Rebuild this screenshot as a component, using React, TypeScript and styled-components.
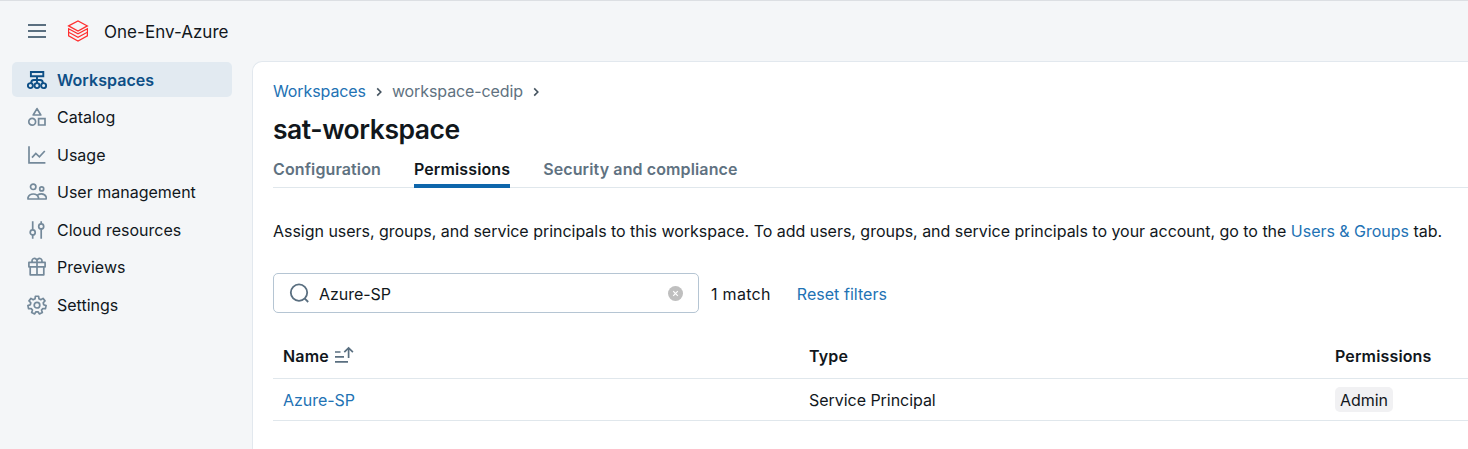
import React from "react";
import styled, { createGlobalStyle, css } from "styled-components";

const GlobalStyle = createGlobalStyle`
  * { box-sizing: border-box; }
  body {
    margin: 0;
    background: #f4f6f8;
    color: #11171c;
    font-family: Inter, "Liberation Sans", sans-serif;
    font-size: 16px;
    line-height: 25px;
  }
`;

const Page = styled.div`
  display: flex;
  flex-direction: column;
  height: 449px;
  overflow: hidden;
  border-top: 1px solid #dcdfe3;
`;

const Header = styled.header`
  display: flex;
  align-items: center;
  height: 60px;
  padding-left: 27px;
`;

const MenuButton = styled.button`
  display: flex;
  padding: 0;
  border: 0;
  background: none;
`;

const Logo = styled.svg`
  margin: 0 15px 0 20px;
`;

const AccountName = styled.span`
  padding-top: 2px;
  font-size: 17px;
  letter-spacing: 0.03px;
`;

const Body = styled.div`
  display: flex;
  flex: 1;
  min-height: 0;
`;

const Sidebar = styled.nav`
  display: flex;
  flex-direction: column;
  gap: 2.5px;
  width: 252px;
  padding: 1px 20px 0 12px;
`;

const NavItem = styled.a<{ $active?: boolean }>`
  display: flex;
  align-items: center;
  gap: 10px;
  height: 35px;
  padding: 1px 0 0 15px;
  border-radius: 5px;
  svg {
    color: #74899a;
    flex: none;
    margin-top: -1px;
  }
  ${(p) =>
    p.$active &&
    css`
      background: #e2eaf1;
      color: #0e4f86;
      font-weight: 600;
      letter-spacing: 0.05px;
      svg { color: #0e4f86; }
    `}
`;

const Panel = styled.main`
  flex: 1;
  min-width: 0;
  padding: 17px 0 0 20px;
  background: #fff;
  border: 1px solid #e2e8ee;
  border-width: 1px 0 0 1px;
  border-top-left-radius: 10px;
`;

const Breadcrumbs = styled.div`
  display: flex;
  align-items: center;
  height: 25px;
  color: #5f7281;
  letter-spacing: -0.1px;
  svg { margin: 1px 8px 0 8px; }
`;

const Link = styled.a`
  color: #2272b4;
`;

const Title = styled.h1`
  margin: 8px 0 0;
  height: 35px;
  font-size: 26.5px;
  line-height: 35px;
  font-weight: 600;
  letter-spacing: -0.45px;
`;

const Tabs = styled.div`
  display: flex;
  gap: 33px;
  height: 41px;
  border-bottom: 1px solid #e0e7ec;
`;

const Tab = styled.div<{ $active?: boolean }>`
  height: 41px;
  padding-top: 10px;
  font-weight: 600;
  letter-spacing: 0.12px;
  color: ${(p) => (p.$active ? "#11171c" : "#5f7281")};
  border-bottom: ${(p) => (p.$active ? "4px solid #0e66ab" : "0")};
`;

const Description = styled.p`
  margin: 31px 0 0;
  white-space: nowrap;
  letter-spacing: -0.025px;
`;

const Filters = styled.div`
  display: flex;
  align-items: center;
  margin-top: 29px;
`;

const SearchBox = styled.div`
  display: flex;
  align-items: center;
  width: 426px;
  height: 40px;
  padding: 0 15px;
  border: 1px solid #b5c5d3;
  border-radius: 5px;
`;

const SearchText = styled.span`
  flex: 1;
  padding: 2px 0 0 10px;
  letter-spacing: -0.03px;
`;

const MatchCount = styled.span`
  margin: 2px 26px 0 12px;
  letter-spacing: 0.3px;
`;

const ResetLink = styled(Link)`
  margin-top: 2px;
  letter-spacing: 0.04px;
`;

const TableRow = styled.div<{ $head?: boolean }>`
  display: grid;
  grid-template-columns: 526px 526px 1fr;
  align-items: center;
  height: ${(p) => (p.$head ? "44px" : "42px")};
  margin-top: ${(p) => (p.$head ? "22px" : "0")};
  padding: ${(p) => (p.$head ? "0 0 1px 10px" : "1px 0 0 10px")};
  border-bottom: 1px solid #e0e7ec;
  font-weight: ${(p) => (p.$head ? 600 : 400)};
  letter-spacing: ${(p) => (p.$head ? "0.15px" : "-0.04px")};
`;

const Cell = styled.div`
  display: flex;
  align-items: center;
  gap: 5px;
  height: 25px;
`;

const SortIcon = styled.svg`
  margin-top: -1px;
`;

const Tag = styled.span`
  height: 25px;
  margin-top: -2px;
  padding: 1px 5px 0;
  border-radius: 5px;
  background: #f1f1f3;
`;

const Icon = ({ children }: { children: React.ReactNode }) => (
  <svg width="20" height="20" viewBox="0 0 20 20" fill="none" stroke="currentColor" strokeWidth="1.7">
    {children}
  </svg>
);

// Outline of a seven-toothed gear centred in a 20x20 box.
const gearPath = () => {
  const points: string[] = [];
  for (let tooth = 0; tooth < 7; tooth++) {
    const centre = -90 + (tooth * 360) / 7;
    for (const [offset, radius] of [
      [-17, 6.7],
      [-10, 9.1],
      [10, 9.1],
      [17, 6.7],
    ]) {
      const a = ((centre + offset) * Math.PI) / 180;
      points.push(`${(10 + radius * Math.cos(a)).toFixed(2)} ${(10.2 + radius * Math.sin(a)).toFixed(2)}`);
    }
  }
  return `M${points.join("L")}Z`;
};

const navItems = [
  {
    label: "Workspaces",
    icon: (
      <>
        <path
          d="M3.9 2h12.4v4.2H3.9zM10 6.2v7M4.2 13c0-2 1-3 2.6-3h6.4c1.6 0 2.6 1 2.6 3"
          strokeWidth="1.9"
        />
        <g strokeWidth="1.9">
          <circle cx="3.4" cy="15.6" r="2.5" />
          <circle cx="10" cy="15.6" r="2.5" />
          <circle cx="16.6" cy="15.6" r="2.5" />
        </g>
      </>
    ),
  },
  {
    label: "Catalog",
    icon: (
      <>
        <path d="M10 1.6 13.8 8H6.2z" strokeLinejoin="round" />
        <circle cx="5.2" cy="14.8" r="3.4" />
        <path d="M11.6 11.6H18V18h-6.4z" />
      </>
    ),
  },
  {
    label: "Usage",
    icon: <path d="M2 1.2V17.8h16.4M5 12.6l3.8-4.2 3.6 3.4 5.4-5.8" />,
  },
  {
    label: "User management",
    icon: (
      <>
        <circle cx="6.2" cy="4.8" r="2.7" />
        <circle cx="14.7" cy="6.9" r="2" />
        <path
          d="M1 17v-1.4C1.8 13.3 3.8 12 6.3 12s4.4 1.3 5.2 3.6V17zM10.7 13c1-.7 2.2-1.1 3.7-1.1 2.3 0 4 1.1 4.8 3.1v2h-7.7"
          strokeLinejoin="round"
        />
      </>
    ),
  },
  {
    label: "Cloud resources",
    icon: (
      <>
        <path d="M5.7 1.2v8.6M5.7 15v3.8M14.2 1.2v2.6M14.2 9v9.8" />
        <circle cx="5.7" cy="12.4" r="2.5" />
        <circle cx="14.2" cy="6.4" r="2.5" />
      </>
    ),
  },
  {
    label: "Previews",
    icon: (
      <path
        d="M1.9 5.4h16.2v4.4H1.9zM3.2 9.8h13.6v8H3.2zM10 5.4v12.4M10 5.2V4a2.5 2.5 0 1 0-4.6 1.3M10 4a2.5 2.5 0 1 1 4.6 1.3"
        strokeLinejoin="round"
      />
    ),
  },
  {
    label: "Settings",
    icon: (
      <>
        <path d={gearPath()} strokeLinejoin="round" />
        <circle cx="10" cy="10.2" r="2.8" />
      </>
    ),
  },
];

const Chevron = () => (
  <svg width="10" height="10" viewBox="0 0 10 10" fill="none" stroke="#44535f" strokeWidth="1.6">
    <path d="m3.2 1.4 3.6 3.6-3.6 3.6" />
  </svg>
);

export default function App() {
  return (
    <Page>
      <GlobalStyle />
      <Header>
        <MenuButton aria-label="Menu">
          <svg width="20" height="20" viewBox="0 0 20 20" stroke="#5a6f80" strokeWidth="1.8">
            <path d="M1 4h18M1 10h18M1 16h18" />
          </svg>
        </MenuButton>
        <Logo width="22" height="22" viewBox="0 0 22 22" fill="none" stroke="#ff2f2f" strokeWidth="1.2">
          <path d="M1.6 5.9 11 .9l9.4 5-9.4 5.2zM1.6 8.7l9.4 5.2 9.4-5.2v3.5L11 17.4l-9.4-5.2zM1.6 12.2v3.6L11 21l9.4-5.2v-3.6" />
        </Logo>
        <AccountName>One-Env-Azure</AccountName>
      </Header>
      <Body>
        <Sidebar>
          {navItems.map((item, i) => (
            <NavItem key={item.label} $active={i === 0}>
              <Icon>{item.icon}</Icon>
              {item.label}
            </NavItem>
          ))}
        </Sidebar>
        <Panel>
          <Breadcrumbs>
            <Link>Workspaces</Link>
            <Chevron />
            <span>workspace-cedip</span>
            <Chevron />
          </Breadcrumbs>
          <Title>sat-workspace</Title>
          <Tabs>
            <Tab>Configuration</Tab>
            <Tab $active>Permissions</Tab>
            <Tab>Security and compliance</Tab>
          </Tabs>
          <Description>
            Assign users, groups, and service principals to this workspace. To add users, groups, and service
            principals to your account, go to the <Link>Users &amp; Groups</Link> tab.
          </Description>
          <Filters>
            <SearchBox>
              <svg width="20" height="20" viewBox="0 0 20 20" fill="none" stroke="#5a6f80" strokeWidth="1.8">
                <circle cx="10" cy="9.6" r="8.2" />
                <path d="m15.6 15.4 3.6 3.6" />
              </svg>
              <SearchText>Azure-SP</SearchText>
              <svg width="15" height="15" viewBox="0 0 15 15">
                <circle cx="7.5" cy="7.5" r="7.5" fill="#bfbfbf" />
                <path d="m5.2 5.2 4.6 4.6m0-4.6L5.2 9.8" stroke="#fff" strokeWidth="1.2" />
              </svg>
            </SearchBox>
            <MatchCount>1 match</MatchCount>
            <ResetLink>Reset filters</ResetLink>
          </Filters>
          <TableRow $head>
            <Cell>
              Name
              <SortIcon width="20" height="20" viewBox="0 0 20 20" fill="none" stroke="#5a6f80" strokeWidth="1.7">
                <path d="M1 6h5.5M1 10.9h9M1 15.9h13M14.6 12V2.2M10.3 6.2l4.3-4.3 4.3 4.3" />
              </SortIcon>
            </Cell>
            <Cell>Type</Cell>
            <Cell>Permissions</Cell>
          </TableRow>
          <TableRow>
            <Cell>
              <Link>Azure-SP</Link>
            </Cell>
            <Cell>Service Principal</Cell>
            <Cell>
              <Tag>Admin</Tag>
            </Cell>
          </TableRow>
        </Panel>
      </Body>
    </Page>
  );
}
